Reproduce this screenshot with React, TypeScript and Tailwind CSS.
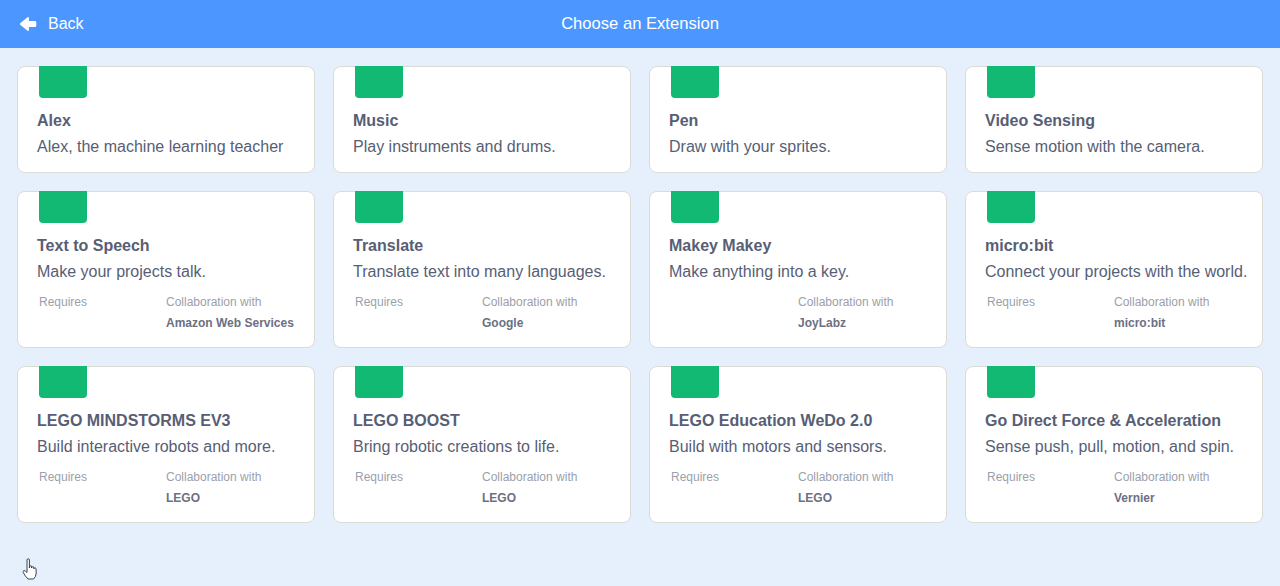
import React from "react";

type Ext = {
  title: string;
  desc: string;
  requires?: boolean;
  collab?: string;
};

const exts: Ext[] = [
  { title: "Alex", desc: "Alex, the machine learning teacher" },
  { title: "Music", desc: "Play instruments and drums." },
  { title: "Pen", desc: "Draw with your sprites." },
  { title: "Video Sensing", desc: "Sense motion with the camera." },
  { title: "Text to Speech", desc: "Make your projects talk.", requires: true, collab: "Amazon Web Services" },
  { title: "Translate", desc: "Translate text into many languages.", requires: true, collab: "Google" },
  { title: "Makey Makey", desc: "Make anything into a key.", requires: false, collab: "JoyLabz" },
  { title: "micro:bit", desc: "Connect your projects with the world.", requires: true, collab: "micro:bit" },
  { title: "LEGO MINDSTORMS EV3", desc: "Build interactive robots and more.", requires: true, collab: "LEGO" },
  { title: "LEGO BOOST", desc: "Bring robotic creations to life.", requires: true, collab: "LEGO" },
  { title: "LEGO Education WeDo 2.0", desc: "Build with motors and sensors.", requires: true, collab: "LEGO" },
  { title: "Go Direct Force & Acceleration", desc: "Sense push, pull, motion, and spin.", requires: true, collab: "Vernier" },
];

function Card({ e }: { e: Ext }) {
  return (
    <div className="relative flex flex-col rounded-lg border border-[#dcdcd6] bg-white px-[19px] pb-[13px]">
      <div className="ml-[2px] h-8 w-12 -mt-px rounded-b-[4px] bg-[#12b972]" />
      <div className="mt-[13px] text-[16px] font-bold leading-5 text-[#575e75]">{e.title}</div>
      <div className="mt-1 whitespace-nowrap text-[16px] leading-6 text-[#575e75]">{e.desc}</div>
      {e.collab !== undefined && (
        <div className="mt-[10px] grid grid-cols-2 pb-[3px] text-[12px] leading-4">
          <div className="pl-[2px] text-[#9a9fab]">{e.requires ? "Requires" : ""}</div>
          <div>
            <div className="text-[#9a9fab]">Collaboration with</div>
            <div className="mt-[5px] font-bold text-[#6b7083]">{e.collab}</div>
          </div>
        </div>
      )}
    </div>
  );
}

export default function App() {
  return (
    <div
      className="relative flex h-[586px] w-[1280px] flex-col overflow-hidden bg-[#e6effc]"
      style={{ fontFamily: '"Liberation Sans", Arial, sans-serif' }}
    >
      <div className="relative flex h-12 shrink-0 items-center bg-[#4c97ff] text-white">
        <div className="flex items-center pl-[19px]">
          <svg width="18" height="16" viewBox="0 0 18 16">
            <path
              d="M8.5 1.2 L1.2 7.2 Q0.4 8 1.2 8.8 L8.5 14.8 Q9.6 15.6 9.9 14.3 L9.9 11 L16 11 Q17.3 11 17.3 9.7 L17.3 6.3 Q17.3 5 16 5 L9.9 5 L9.9 1.7 Q9.6 0.4 8.5 1.2 Z"
              fill="white"
            />
          </svg>
          <span className="ml-[11px] text-[16px]">Back</span>
        </div>
        <div className="pointer-events-none absolute inset-x-0 text-center text-[16.6px]">Choose an Extension</div>
      </div>
      <div className="grid grid-cols-4 gap-x-[18px] gap-y-[18px] px-[17px] pt-[18px]">
        {exts.map((e, i) => (
          <Card key={i} e={e} />
        ))}
      </div>
      <svg className="absolute left-[22px] top-[558px]" width="18" height="24" viewBox="0 0 18 24">
        <path
          d="M5 2 Q5 0.8 6.2 0.8 Q7.4 0.8 7.4 2 L7.4 10 L7.6 8.3 Q8.4 7.4 9.4 8 L9.6 10 L9.9 9 Q10.8 8.3 11.7 9 L11.9 10.8 L12.3 10 Q13.3 9.6 14 10.4 L14.2 15 Q14 19 11.5 21 L6 21 Q3 18 1.2 14.5 Q0.6 13 2 12.6 Q3.2 12.4 5 14.5 Z"
          fill="white"
          stroke="#3a4250"
          strokeWidth="1"
          strokeLinejoin="round"
        />
      </svg>
    </div>
  );
}
